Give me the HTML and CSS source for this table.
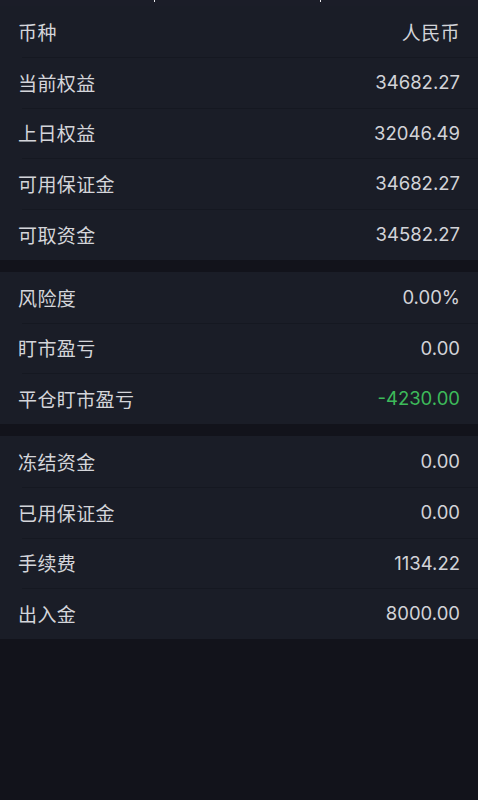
FILE: index.html
```html
<!DOCTYPE html>
<html lang="zh-CN">
<head>
<meta charset="utf-8">
<link rel="stylesheet" href="styles.css">
</head>
<body>
<div class="topstrip"><span class="mark mark-l"></span><span class="mark mark-r"></span></div>
<section class="group">
  <div class="row"><span class="label">币种</span><span class="value cjk">人民币</span></div>
  <div class="row"><span class="label">当前权益</span><span class="value">34682.27</span></div>
  <div class="row"><span class="label">上日权益</span><span class="value">32046.49</span></div>
  <div class="row"><span class="label">可用保证金</span><span class="value">34682.27</span></div>
  <div class="row"><span class="label">可取资金</span><span class="value">34582.27</span></div>
</section>
<section class="group">
  <div class="row"><span class="label">风险度</span><span class="value">0.00%</span></div>
  <div class="row"><span class="label">盯市盈亏</span><span class="value">0.00</span></div>
  <div class="row"><span class="label">平仓盯市盈亏</span><span class="value green">-4230.00</span></div>
</section>
<section class="group">
  <div class="row"><span class="label">冻结资金</span><span class="value">0.00</span></div>
  <div class="row"><span class="label">已用保证金</span><span class="value">0.00</span></div>
  <div class="row"><span class="label">手续费</span><span class="value">1134.22</span></div>
  <div class="row"><span class="label">出入金</span><span class="value">8000.00</span></div>
</section>
</body>
</html>
```
FILE: styles.css
```css
html, body {
  margin: 0;
  padding: 0;
  background: #12131b;
  height: 100%;
}
body {
  font-family: "Noto Sans CJK SC", "Noto Sans", sans-serif;
  color: #d4d5da;
}
.topstrip {
  height: 6px;
  background: #1b1d28;
  position: relative;
}
.mark {
  position: absolute;
  top: 0;
  width: 1px;
  height: 2px;
  background: #e8e8ec;
}
.mark-l { left: 154px; }
.mark-r { left: 320px; }
.group {
  background: #1a1d27;
  margin-bottom: 12px;
}
.row {
  height: 50.75px;
  display: flex;
  align-items: center;
  justify-content: space-between;
  padding: 0 18px;
  position: relative;
}
.row + .row::before {
  content: "";
  position: absolute;
  left: 22px;
  right: 0;
  top: 0;
  height: 1px;
  background: #151821;
}
.label {
  font-size: 19px;
  letter-spacing: 0.4px;
  line-height: 1;
}
.value {
  font-family: Inter, "Noto Sans CJK SC", sans-serif;
  font-size: 18.5px;
  line-height: 1;
  color: #d2d3d8;
}
.value.cjk {
  font-family: "Noto Sans CJK SC", sans-serif;
  font-size: 19px;
  letter-spacing: 0.4px;
}
.green {
  color: #3dba5a;
}
```
